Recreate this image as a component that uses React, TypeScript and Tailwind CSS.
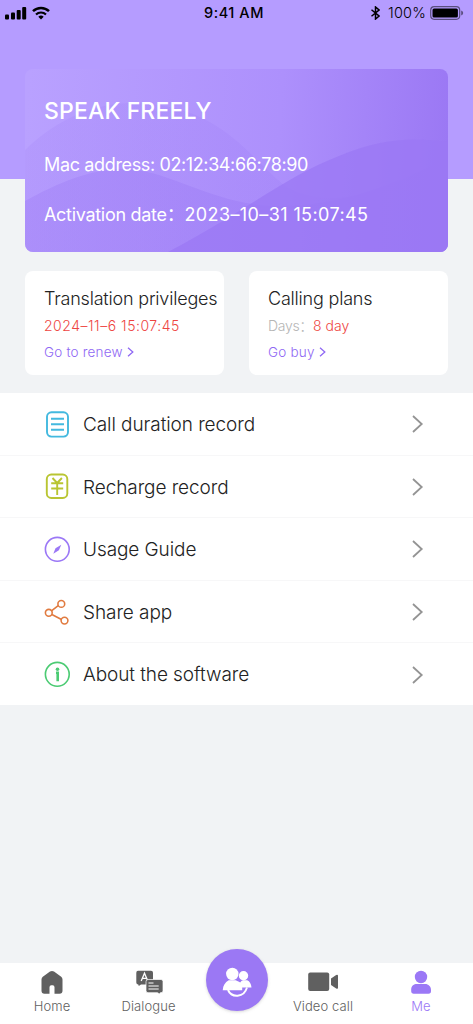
import type { ReactNode } from "react";

function StatusBar() {
  return (
    <div className="grid h-[26px] grid-cols-3 items-center px-[5px] text-black">
      <div className="flex items-center gap-[5px]">
        <svg width="22" height="14" viewBox="0 0 22 14" fill="currentColor">
          <rect x="0" y="8.500" width="4" height="5" rx="1" />
          <rect x="6" y="6.500" width="4" height="7" rx="1" />
          <rect x="11.700" y="4" width="4" height="9.500" rx="1" />
          <rect x="17.200" y="1" width="4" height="12.500" rx="1" />
        </svg>
        <svg width="18" height="14" viewBox="0 0 18 14" fill="none" stroke="currentColor">
          <path d="M1 5.200a11.500 11.500 0 0 1 16 0" strokeWidth="2.500" />
          <path d="M4 8.500a7.300 7.300 0 0 1 10 0" strokeWidth="2.200" />
          <path d="M6.300 10.700a4 4 0 0 1 5.400 0L9 13.500z" fill="currentColor" stroke="none" />
        </svg>
      </div>
      <div className="pr-[5px] text-center text-[14.500px] font-medium tracking-[0.55px] whitespace-nowrap">9:41 AM</div>
      <div className="flex items-center justify-end pr-[4px]">
        <svg className="mr-2" width="9" height="14" viewBox="0 0 9 14" fill="none" stroke="currentColor" strokeWidth="1.500">
          <path d="M.5 3.700 8 10 4.500 13V1L8 4 .5 10.300" />
        </svg>
        <span className="mr-1 text-[14.500px] font-light tracking-[0.2px]">100%</span>
        <svg width="34" height="14" viewBox="0 0 34 14">
          <rect x=".7" y=".7" width="29" height="12.600" rx="3.500" fill="none" stroke="#000" strokeOpacity=".5" strokeWidth="1.200" />
          <rect x="2.500" y="2.500" width="25.400" height="9" rx="1.500" />
          <path d="M31.200 4.500q2 .8 2 2.500t-2 2.500z" fillOpacity=".5" />
        </svg>
      </div>
    </div>
  );
}

function DeviceCard() {
  return (
    <section className="relative mx-[25px] mt-[43px] h-[183px] overflow-hidden rounded-lg text-white">
      <svg className="absolute inset-0" width="423" height="183" viewBox="0 0 423 183">
        <defs>
          <linearGradient id="card" gradientUnits="userSpaceOnUse" x1="0" y1="60" x2="423" y2="85">
            <stop offset="0" stopColor="#b9a1ff" />
            <stop offset=".6" stopColor="#ad90fc" />
            <stop offset="1" stopColor="#9b78f4" />
          </linearGradient>
          <linearGradient id="wave" x1="0" y1="0" x2="1" y2="0">
            <stop offset="0" stopColor="#a586f8" />
            <stop offset=".6" stopColor="#9e7ef6" />
            <stop offset="1" stopColor="#9b78f4" />
          </linearGradient>
        </defs>
        <path d="M0 0h423v183H0z" fill="url(#card)" />
        <path d="M0 81C35 47 75 33 110 34c85 2 112 52 150 83 50 30 113-2 163-28v94H0z" fill="url(#wave)" opacity=".25" />
        <path d="M0 132c33-18 65-32 98-32 46 0 90 36 153 37 60 1 115-20 172-48v94H0z" fill="url(#wave)" opacity=".55" />
        <path d="M143 183c80-42 118-76 171-96 42-17 71-19 109-14v110z" fill="#9b78f4" opacity=".75" />
      </svg>
      <div className="relative flex flex-col pl-[19px] whitespace-nowrap">
        <h1 className="mt-[25px] text-[23px] leading-[34px] font-medium tracking-[0.15px]">SPEAK FREELY</h1>
        <p className="mt-[23px] text-[18px] leading-[28px] tracking-[-0.35px]">
          Mac address: <span className="tracking-[-0.4px]">02:12:34:66:78:90</span>
        </p>
        <p className="mt-[22px] text-[18px] leading-[28px] tracking-[-0.3px]">
          Activation date：<span className="tracking-[0.4px]">2023–10–31 15:07:45</span>
        </p>
      </div>
    </section>
  );
}

function LinkChevron() {
  return (
    <svg className="ml-[4px]" width="7" height="10" viewBox="0 0 7 10" fill="none" stroke="currentColor" strokeWidth="1.300">
      <path d="m1 .8 4.800 4.200L1 9.200" />
    </svg>
  );
}

function PlanCard({ title, detail, action }: { title: string; detail: ReactNode; action: ReactNode }) {
  return (
    <section className="flex h-[104px] min-w-0 flex-1 flex-col rounded-lg bg-white pt-[15px] pl-[19px] font-light whitespace-nowrap">
      <h2 className="text-[18px] leading-[26px] tracking-[-0.2px] text-[#222]">{title}</h2>
      <p className="mt-[4px] text-[14px] leading-5 text-[#ee4542]">{detail}</p>
      <div className="mt-[6px] flex items-center text-[13.500px] leading-5 tracking-[0.2px] text-[#8f68f4]">
        {action}
        <LinkChevron />
      </div>
    </section>
  );
}

const rows: { label: string; icon: ReactNode }[] = [
  {
    label: "Call duration record",
    icon: (
      <g stroke="#43b9df" strokeWidth="1.900">
        <rect x="3" y="1.300" width="21" height="24.300" rx="4.500" />
        <path d="M7 7.700h13M7 13.200h13M7 18.700h13" />
      </g>
    ),
  },
  {
    label: "Recharge record",
    icon: (
      <g stroke="#b9c532" strokeWidth="1.900">
        <rect x="2.800" y="1.500" width="20.500" height="23.500" rx="4.500" />
        <path d="m8.500 5 4.700 5 4.700-5M7.200 10.200h12M7.200 15.500h12M13.200 10v12" />
      </g>
    ),
  },
  {
    label: "Usage Guide",
    icon: (
      <g stroke="#9b78f6">
        <circle cx="13.300" cy="13.300" r="11.900" />
        <path d="m17.300 8.800-5.800 3.500-2.200 5.500 5.600-3.500z" fill="#9b78f6" stroke="none" />
      </g>
    ),
  },
  {
    label: "Share app",
    icon: (
      <g stroke="#e17b40">
        <circle cx="17.300" cy="4.900" r="3.400" />
        <circle cx="4.800" cy="13.800" r="3.400" />
        <circle cx="20.500" cy="21.600" r="3.400" />
        <path d="m14.200 6.700-6.400 4.900M7.900 15.500l9.600 5" />
      </g>
    ),
  },
  {
    label: "About the software",
    icon: (
      <g stroke="#4bcb73">
        <circle cx="13.300" cy="13.300" r="11.900" />
        <circle cx="13.500" cy="8.300" r="1.800" fill="#4bcb73" stroke="none" />
        <path d="M12 11.700h1.700v8.600" strokeWidth="2.600" />
      </g>
    ),
  },
];

function Menu() {
  return (
    <nav className="mt-[18px] flex h-[312px] flex-col bg-white text-[19px] font-light tracking-[-0.08px] text-[#222]">
      {rows.map((row) => (
        <div key={row.label} className="flex flex-1 items-center border-b border-[#f7f7f8] pt-px pr-[49px] pl-[44px] last:border-b-0">
          <svg className="mr-3 shrink-0" width="27" height="27" viewBox="0 0 27 27" fill="none" strokeWidth="1.600">
            {row.icon}
          </svg>
          <span className="flex-1 pt-[2px] whitespace-nowrap">{row.label}</span>
          <svg width="13" height="18" viewBox="0 0 13 18" fill="none" stroke="#949494" strokeWidth="1.800">
            <path d="m2 1 8.700 8L2 17" />
          </svg>
        </div>
      ))}
    </nav>
  );
}

function Tab({ icon, label, className }: { icon: ReactNode; label: string; className: string }) {
  return (
    <div className={"flex flex-col items-center pt-[5px] text-[13px] font-light tracking-[0.1px] whitespace-nowrap " + className}>
      <svg width="32" height="28" viewBox="0 0 32 28" fill="currentColor">
        {icon}
      </svg>
      <span className="leading-5">{label}</span>
    </div>
  );
}

function TabBar() {
  return (
    <footer className="mt-auto flex h-[61px] bg-white text-[#606060]">
      <Tab
        className="w-[104px]"
        label="Home"
        icon={<path d="M14 3.500q2-1.200 4 0l7.200 5.300q1.300 1 1.300 2.700v11.300q0 3-3 3h-5v-6.600q0-2-1.800-2h-1.400q-1.800 0-1.800 2v6.600h-5q-3 0-3-3V11.500q0-1.700 1.300-2.700z" />}
      />
      <Tab
        className="w-[89px]"
        label="Dialogue"
        icon={
          <>
            <path d="M5 2.700h13q2 0 2 2v10q0 1.700-2 1.700H8l-2.200 1.500-.5-1.500q-2 0-2-2V4.700q0-2 1.700-2z" />
            <path d="M8.200 13 11.500 5.200 14.800 13M9.400 10.300h4.300" fill="none" stroke="white" strokeWidth="1.300" />
            <path d="M15 11.500h13q2 0 2 2v9.500q0 1.700-2 1.700h-.7L26.500 26l-2-1.300H15q-2 0-2-2v-9q0-2.200 2-2.200z" stroke="white" strokeWidth=".7" />
            <path d="M15.500 15h5M15.500 18h10.200M15.500 21h10.200" stroke="white" strokeWidth="1" />
          </>
        }
      />
      <div className="flex w-[87px] justify-center">
        <div className="-mt-[14px] size-[62px] rounded-full bg-[#9b78f4] shadow-[0_1px_3px_#9996]">
          <svg width="62" height="62" viewBox="0 0 62 62" fill="white">
            <circle cx="26.300" cy="25" r="6.200" />
            <circle cx="37.500" cy="26.800" r="4.700" />
            <path d="M16.700 41.300c.5-5 2.300-8 6-10h7c2.300 1 3.500 1.600 4.500 2.300 1-1.500 2-2.300 3-2.300h4c2.500 1.200 4 3.500 4.300 7.200h-9.300v2.800z" />
            <path d="M22 41c3.500 8 16 8 19-2.500" fill="none" stroke="white" strokeWidth="1.900" />
          </svg>
        </div>
      </div>
      <Tab
        className="w-[86px]"
        label="Video call"
        icon={
          <>
            <rect x="1.200" y="4.500" width="21" height="18.500" rx="2" />
            <path d="M24 10.500 29.200 7q1.800-.8 1.800 1v11.700q0 1.500-1.800.7L24 17z" />
          </>
        }
      />
      <Tab
        className="w-[107px] pl-[3px] text-[#9b78f6]"
        label="Me"
        icon={
          <>
            <circle cx="16" cy="9" r="6.200" />
            <path d="M6.200 23v-1.500c0-4 3-5.500 5.500-5.500h8.600c3 0 5.700 2.500 5.700 6V23q0 2.700-2.500 2.700H8.700Q6.200 25.700 6.200 23z" />
          </>
        }
      />
    </footer>
  );
}

export default function App() {
  return (
    <div className="flex h-[1024px] w-[473px] flex-col overflow-hidden bg-[linear-gradient(#b59cff_179px,#f1f3f5_179px)] font-['Inter','Noto_Sans_CJK_SC',sans-serif]">
      <StatusBar />
      <DeviceCard />
      <div className="mx-[25px] mt-[19px] flex gap-[25px]">
        <PlanCard
          title="Translation privileges"
          detail={<span className="tracking-[0.53px]">2024–11–6 15:07:45</span>}
          action={<span>Go to renew</span>}
        />
        <PlanCard
          title="Calling plans"
          detail={
            <>
              <span className="tracking-[-0.3px] text-[#b5b5b5]">Days：</span>8 day
            </>
          }
          action={<span>Go buy</span>}
        />
      </div>
      <Menu />
      <TabBar />
    </div>
  );
}
